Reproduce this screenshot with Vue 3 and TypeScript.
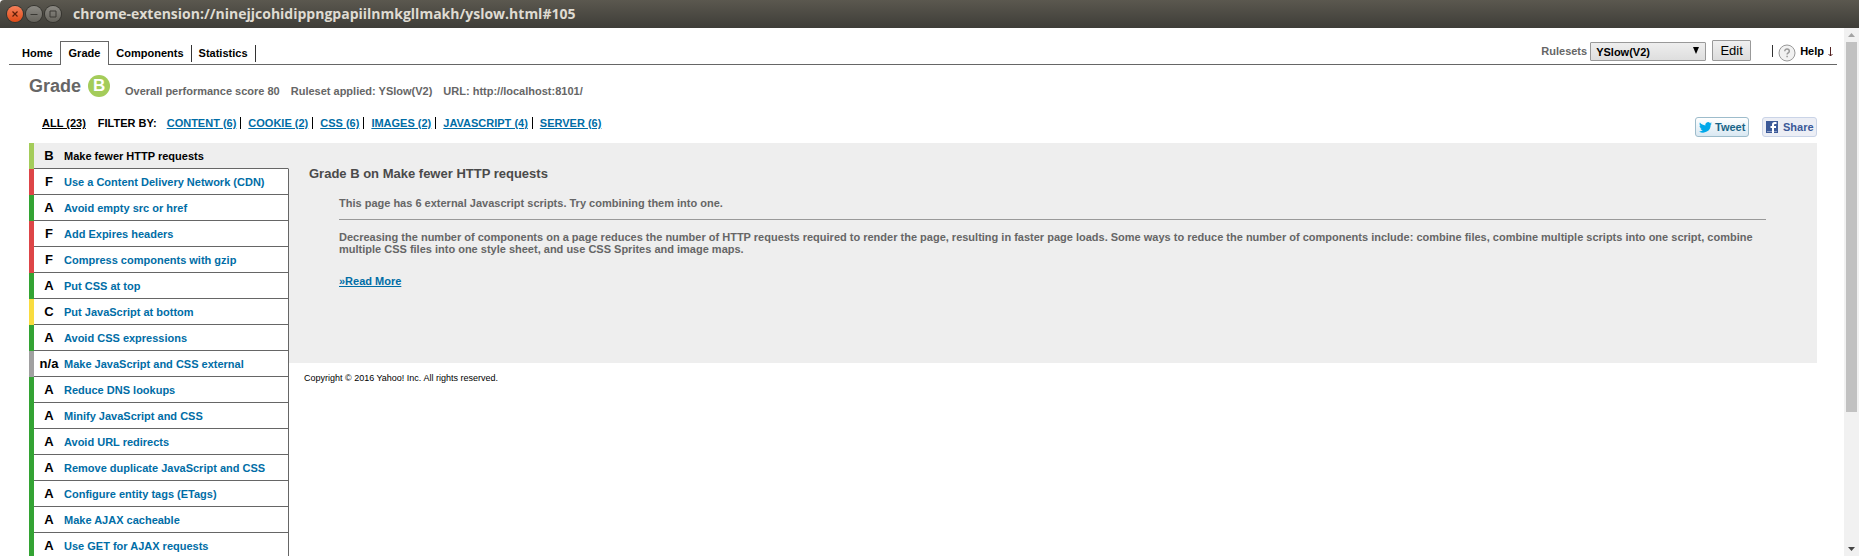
<script setup lang="ts">
import { ref, computed } from 'vue'

interface Rule {
  grade: string
  name: string
}

const tabs: string[] = ['Home', 'Grade', 'Components', 'Statistics']
const activeTab = ref('Grade')

const filters: string[] = ['CONTENT (6)', 'COOKIE (2)', 'CSS (6)', 'IMAGES (2)', 'JAVASCRIPT (4)', 'SERVER (6)']

const rules: Rule[] = [
  { grade: 'B', name: 'Make fewer HTTP requests' },
  { grade: 'F', name: 'Use a Content Delivery Network (CDN)' },
  { grade: 'A', name: 'Avoid empty src or href' },
  { grade: 'F', name: 'Add Expires headers' },
  { grade: 'F', name: 'Compress components with gzip' },
  { grade: 'A', name: 'Put CSS at top' },
  { grade: 'C', name: 'Put JavaScript at bottom' },
  { grade: 'A', name: 'Avoid CSS expressions' },
  { grade: 'n/a', name: 'Make JavaScript and CSS external' },
  { grade: 'A', name: 'Reduce DNS lookups' },
  { grade: 'A', name: 'Minify JavaScript and CSS' },
  { grade: 'A', name: 'Avoid URL redirects' },
  { grade: 'A', name: 'Remove duplicate JavaScript and CSS' },
  { grade: 'A', name: 'Configure entity tags (ETags)' },
  { grade: 'A', name: 'Make AJAX cacheable' },
  { grade: 'A', name: 'Use GET for AJAX requests' },
]
const selected = ref(0)
const current = computed(() => rules[selected.value])

function gradeClass(grade: string): string {
  return 'grade-' + grade.replace('/', '').toLowerCase()
}
</script>

<template>
  <div class="window">
    <header class="titlebar">
      <button class="wm close" aria-label="Close">
        <svg viewBox="0 0 16 16"><path d="M5.5 5.5l5 5M10.5 5.5l-5 5" /></svg>
      </button>
      <button class="wm" aria-label="Minimize">
        <svg viewBox="0 0 16 16"><path d="M4.5 8.5h7" /></svg>
      </button>
      <button class="wm" aria-label="Maximize">
        <svg viewBox="0 0 16 16"><path d="M5 5h6v6H5z" /></svg>
      </button>
      <span class="title">chrome-extension://ninejjcohidippngpapiilnmkgllmakh/yslow.html#105</span>
    </header>

    <div class="viewport">
      <main class="page">
        <div class="topbar">
          <nav class="tabs">
            <button
              v-for="tab in tabs"
              :key="tab"
              class="tab"
              :class="{ active: tab === activeTab }"
              @click="activeTab = tab"
            ><span>{{ tab }}</span></button>
          </nav>
          <div class="tools">
            <label for="ruleset">Rulesets</label>
            <span class="select-wrap">
              <select id="ruleset">
                <option>YSlow(V2)</option>
              </select>
              <svg class="caret" viewBox="0 0 6 7"><path d="M0 0h6L3 7z" /></svg>
            </span>
            <button class="edit">Edit</button>
            <span class="divider"></span>
            <a class="help" href="#help">
              <svg class="help-icon" viewBox="0 0 18 18">
                <circle cx="9" cy="9" r="8" />
                <path d="M6.8 7.2c0-3 4.5-2.8 4.5 0 0 1.6-2.2 1.6-2.2 3.3M9.100 11.800v1.400" />
              </svg>
              <span>Help</span>
              <svg class="down" viewBox="0 0 5 10"><path d="M2.500 0v9M.5 7l2 2 2-2" /></svg>
            </a>
          </div>
        </div>

        <div class="content">
          <div class="summary">
            <h1>Grade</h1>
            <span class="badge">B</span>
            <div class="facts">
              <span>Overall performance score 80</span>
              <span>Ruleset applied: YSlow(V2)</span>
              <span>URL: http://localhost:8101/</span>
            </div>
          </div>

          <div class="filter-row">
            <a class="all" href="#all">ALL (23)</a>
            <span class="filter-label">FILTER BY:</span>
            <ul class="filters">
              <li v-for="filter in filters" :key="filter"><a href="#filter">{{ filter }}</a></li>
            </ul>
            <div class="social">
              <button class="tweet">
                <svg viewBox="0 0 24 20">
                  <path d="M24 2.400c-.9.4-1.800.7-2.800.8 1-.6 1.800-1.600 2.100-2.700-.9.6-2 1-3.100 1.200A4.900 4.900 0 0 0 11.800 6.100C7.700 5.900 4.100 4 1.700.9.400 3.200 1.100 6 3.200 7.500c-.8 0-1.600-.2-2.200-.6 0 2.400 1.700 4.400 3.900 4.900-.7.2-1.500.2-2.200.1.6 2 2.400 3.400 4.600 3.400A9.900 9.900 0 0 1 0 17.300 14 14 0 0 0 21.500 4.900c1-.7 1.800-1.600 2.500-2.500z" />
                </svg>
                Tweet
              </button>
              <button class="share">
                <svg viewBox="0 0 12 12">
                  <rect width="12" height="12" fill="#3b5998" />
                  <path d="M1 10.500h10" stroke="#8c9dc5" />
                  <path d="M8 12V7h2V5H8V4q0-1 1-1h1.500V1H8.500Q6 1 6 3.500V5H4.500v2H6v5z" fill="#fff" />
                </svg>
                Share
              </button>
            </div>
          </div>

          <div class="report">
            <ul class="rules">
              <li
                v-for="(rule, i) in rules"
                :key="rule.name"
                class="rule"
                :class="[gradeClass(rule.grade), { selected: i === selected }]"
              >
                <a href="#rule" @click.prevent="selected = i">
                  <b>{{ rule.grade }}</b>
                  <span>{{ rule.name }}</span>
                </a>
              </li>
            </ul>
            <div class="side">
              <section class="detail">
                <h2>Grade {{ current.grade }} on {{ current.name }}</h2>
                <div class="detail-body">
                  <p>This page has 6 external Javascript scripts. Try combining them into one.</p>
                  <hr />
                  <p>Decreasing the number of components on a page reduces the number of HTTP requests required to render the page, resulting in faster page loads. Some ways to reduce the number of components include: combine files, combine multiple scripts into one script, combine multiple CSS files into one style sheet, and use CSS Sprites and image maps.</p>
                  <a class="more" href="#more">»Read More</a>
                </div>
              </section>
              <footer>Copyright © 2016 Yahoo! Inc. All rights reserved.</footer>
            </div>
          </div>
        </div>
      </main>

      <div class="scrollbar">
        <svg class="arrow up" viewBox="0 0 7 4"><path d="M0 4h7L3.500 0z" /></svg>
        <div class="track"><div class="thumb"></div></div>
        <svg class="arrow" viewBox="0 0 7 4"><path d="M0 0h7L3.500 4z" /></svg>
      </div>
    </div>
  </div>
</template>

<style>
body {
  margin: 0;
  overflow: hidden;
}
</style>

<style scoped>
* {
  box-sizing: border-box;
}
.window {
  display: flex;
  flex-direction: column;
  height: 100vh;
  background: #fff;
  color: #000;
  font: bold 11px/12px "Liberation Sans", Arial, sans-serif;
}
button {
  font: inherit;
  color: inherit;
  padding: 0;
  margin: 0;
  border: 0;
  background: none;
}
ul {
  list-style: none;
  margin: 0;
  padding: 0;
}
a {
  color: #006da6;
}
.titlebar {
  flex: none;
  display: flex;
  align-items: center;
  gap: 3px;
  height: 28px;
  padding-left: 7px;
  border-radius: 4px 0 0 0;
  background: linear-gradient(#5b584f, #3e3d38);
}
.wm {
  width: 16px;
  height: 16px;
  border-radius: 50%;
  background: linear-gradient(#8b8983, #65635c);
  box-shadow: 0 0 0 1px #35342f;
}
.wm.close {
  background: linear-gradient(#f5805a, #df4a16);
}
.wm svg {
  display: block;
  fill: none;
  stroke: #3a3934;
  stroke-width: 1;
}
.wm.close svg {
  stroke: #5c1e08;
  stroke-width: 1.2;
}
.title {
  margin-left: 9px;
  color: #dfdbd2;
  font: bold 14px/20px "Open Sans", "Noto Sans", sans-serif;
}
.viewport {
  flex: 1;
  display: flex;
  min-height: 0;
  overflow: hidden;
}
.page {
  flex: 1;
  min-width: 0;
  padding: 12px 7px 0 9px;
}
.topbar {
  display: flex;
  justify-content: space-between;
  height: 25px;
  border-bottom: 1px solid #666;
}
.tabs {
  display: flex;
  align-items: flex-end;
}
.tab {
  height: 23px;
  padding: 4px 0 2px;
}
.tab span {
  display: block;
  padding: 2px 7px 3px;
  border-right: 1px solid #333;
}
.tab:first-child span {
  padding-left: 13px;
  border-right: 0;
}
.tab.active {
  height: 24px;
  margin-bottom: -1px;
  border: 1px solid #666;
  border-bottom: 0;
  background: #fff;
  padding: 3px 0 3px;
}
.tab.active span {
  padding: 2px 8px 3px;
  border-right: 0;
}
.tools {
  display: flex;
  align-items: flex-start;
  padding-right: 4px;
}
.tools label {
  padding: 5px 3px 0 0;
  color: #666;
}
.select-wrap {
  position: relative;
  margin: 2px 6px 0 0;
}
.select-wrap select {
  display: block;
  appearance: none;
  width: 116px;
  height: 19px;
  margin: 0;
  padding: 0 5px;
  border: 1px solid #999;
  border-radius: 1px;
  background: linear-gradient(#eee, #dedede);
  color: #000;
  font: inherit;
}
.caret {
  position: absolute;
  right: 7px;
  top: 5px;
  width: 6px;
  height: 7px;
}
.edit {
  width: 39px;
  height: 21px;
  border: 1px solid #999;
  border-radius: 1px;
  background: linear-gradient(#f0f0f0, #dcdcdc);
  font-size: 13px;
  font-weight: normal;
}
.divider {
  width: 1px;
  height: 12px;
  margin: 5px 5px 0 21px;
  background: #333;
}
.help {
  display: flex;
  align-items: center;
  gap: 4px;
  height: 22px;
  color: #000;
  text-decoration: none;
}
.help-icon {
  width: 18px;
  height: 18px;
  margin-top: 4px;
  fill: #f1f1f1;
  stroke: #999;
}
.help-icon path {
  fill: none;
  stroke-width: 1.5;
}
.down {
  width: 5px;
  height: 10px;
  margin-top: 2px;
  fill: none;
  stroke: #522;
}
.content {
  padding: 10px 20px 0 20px;
}
.summary {
  display: flex;
  align-items: center;
  height: 22px;
}
.summary h1 {
  margin: 0;
  color: #666;
  font-size: 18px;
  line-height: 22px;
}
.badge {
  width: 22px;
  height: 22px;
  margin: 0 15px 0 7px;
  border-radius: 50%;
  background: #a4cc5a;
  color: #fff;
  font-size: 17px;
  line-height: 22px;
  text-align: center;
}
.facts {
  display: flex;
  gap: 11px;
  padding-top: 10px;
  color: #666;
}
.filter-row {
  display: flex;
  margin: 20px 0 6px;
}
.all {
  margin: 0 12px 0 13px;
  color: #000;
}
.filter-label {
  margin-right: 10px;
}
.filters {
  display: flex;
}
.filters li {
  height: 12px;
  padding-right: 4px;
  margin-right: 7px;
  border-right: 1px solid #000;
}
.filters li:last-child {
  border: 0;
}
.social {
  display: flex;
  gap: 13px;
  margin-left: auto;
}
.social button {
  display: flex;
  align-items: center;
  height: 20px;
  border-radius: 3px;
}
.tweet {
  width: 54px;
  gap: 3px;
  padding-left: 3px;
  border: 1px solid #9dbccb;
  background: linear-gradient(#fff, #d9e8f2);
  color: #186487;
}
.tweet svg {
  width: 13px;
  height: 11px;
  fill: #00a8ea;
}
.share {
  width: 55px;
  gap: 5px;
  padding-left: 3px;
  border: 1px solid #cad4e7;
  background: #eceef5;
  color: #3b5998;
}
.share svg {
  width: 12px;
  height: 12px;
}
.report {
  display: flex;
  align-items: flex-start;
}
.rules {
  flex: none;
  width: 260px;
}
.rule {
  border-left: 5px solid #33a333;
}
.rule.grade-b {
  border-left-color: #a4cc5a;
}
.rule.grade-c {
  border-left-color: #f9dc3f;
}
.rule.grade-f {
  border-left-color: #dd4547;
}
.rule.grade-na {
  border-left-color: #a0a0a0;
}
.rule a {
  display: flex;
  align-items: center;
  height: 26px;
  border: 1px solid #666;
  border-width: 0 1px 1px 0;
  text-decoration: none;
}
.rule.selected a {
  border-right-color: #eee;
  background: #eee;
  color: #000;
}
.rule b {
  width: 30px;
  color: #000;
  font-size: 13px;
  text-align: center;
}
.side {
  flex: 1;
  min-width: 0;
}
.detail {
  min-height: 220px;
  padding: 24px 51px 0 20px;
  background: #eee;
  color: #666;
}
.detail h2 {
  margin: 0 0 16px;
  color: #4a4a4a;
  font-size: 13px;
  line-height: 14px;
}
.detail-body {
  padding-left: 30px;
}
.detail p {
  margin: 0;
}
.detail hr {
  height: 1px;
  margin: 10px 0 11px;
  border: 0;
  background: #999;
}
.more {
  display: inline-block;
  margin-top: 20px;
}
footer {
  padding: 9px 15px;
  font-size: 9px;
  font-weight: normal;
}
.scrollbar {
  flex: none;
  display: flex;
  flex-direction: column;
  align-items: center;
  width: 15px;
  padding: 5px 0;
  background: #f1f1f1;
}
.arrow {
  flex: none;
  width: 7px;
  height: 4px;
  fill: #444;
}
.arrow.up {
  fill: #a3a3a3;
}
.track {
  flex: 1;
  width: 11px;
  margin: 5px 0;
}
.thumb {
  height: 74%;
  background: #c1c1c1;
}
</style>
